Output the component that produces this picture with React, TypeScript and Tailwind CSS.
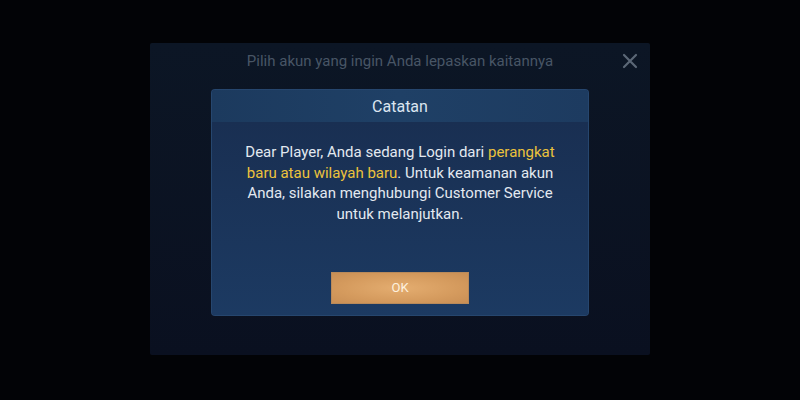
import React from 'react';

const font = { fontFamily: 'Roboto, "Noto Sans", sans-serif' };

const CloseIcon = () => (
  <svg width="16" height="16" viewBox="0 0 16 16" fill="none">
    <path d="M2 2L14 14M14 2L2 14" stroke="#5b6776" strokeWidth="2.2" strokeLinecap="round" />
  </svg>
);

const NoticeDialog = () => (
  <div className="w-[376px] h-[225px] flex flex-col rounded-[3px] bg-[#1a3257] shadow-[0_0_0_1px_#26466e]">
    <div className="h-[32px] flex items-center justify-center bg-gradient-to-r from-[#1c3a5e] via-[#1f4066] to-[#1d3b60] rounded-t-[3px]">
      <span className="text-[16px] leading-[20px] text-[#dbe5f0] mt-[1px]">Catatan</span>
    </div>
    <div className="flex-1 flex flex-col items-center bg-gradient-to-b from-[#192f52] to-[#1c3a62] rounded-b-[3px]">
      {/* message lines are kept as the game breaks them */}
      <div className="mt-[20px] flex flex-col items-center text-[15px] leading-[20.5px] text-[#e3e9f0]">
        <div>
          Dear Player, Anda sedang Login dari <span className="text-[#ecc23c]">perangkat</span>
        </div>
        <div>
          <span className="text-[#ecc23c]">baru atau wilayah baru</span>. Untuk keamanan akun
        </div>
        <div>Anda, silakan menghubungi Customer Service</div>
        <div>untuk melanjutkan.</div>
      </div>
      <button className="mt-auto mb-[12px] w-[136px] h-[30px] flex items-center justify-center text-[13px] text-[#fdf0de] bg-[radial-gradient(ellipse_at_center,#e4ad70_0%,#d59b5e_60%,#c98f55_100%)] shadow-[0_0_0_1px_#b98a5a]">
        OK
      </button>
    </div>
  </div>
);

export default function App() {
  return (
    <div className="w-[800px] h-[400px] bg-[#020306] flex items-center justify-center" style={font}>
      <div className="w-[500px] h-[312px] mt-[-2px] flex flex-col bg-gradient-to-b from-[#0c1625] to-[#0a1020] rounded-[2px]">
        <div className="h-[47px] pt-[7px] flex items-start relative">
          <span className="flex-1 text-center text-[15px] leading-[22px] text-[#485565]">Pilih akun yang ingin Anda lepaskan kaitannya</span>
          <span className="absolute right-[12px] top-[10px]">
            <CloseIcon />
          </span>
        </div>
        <div className="flex justify-center">
          <NoticeDialog />
        </div>
      </div>
    </div>
  );
}
